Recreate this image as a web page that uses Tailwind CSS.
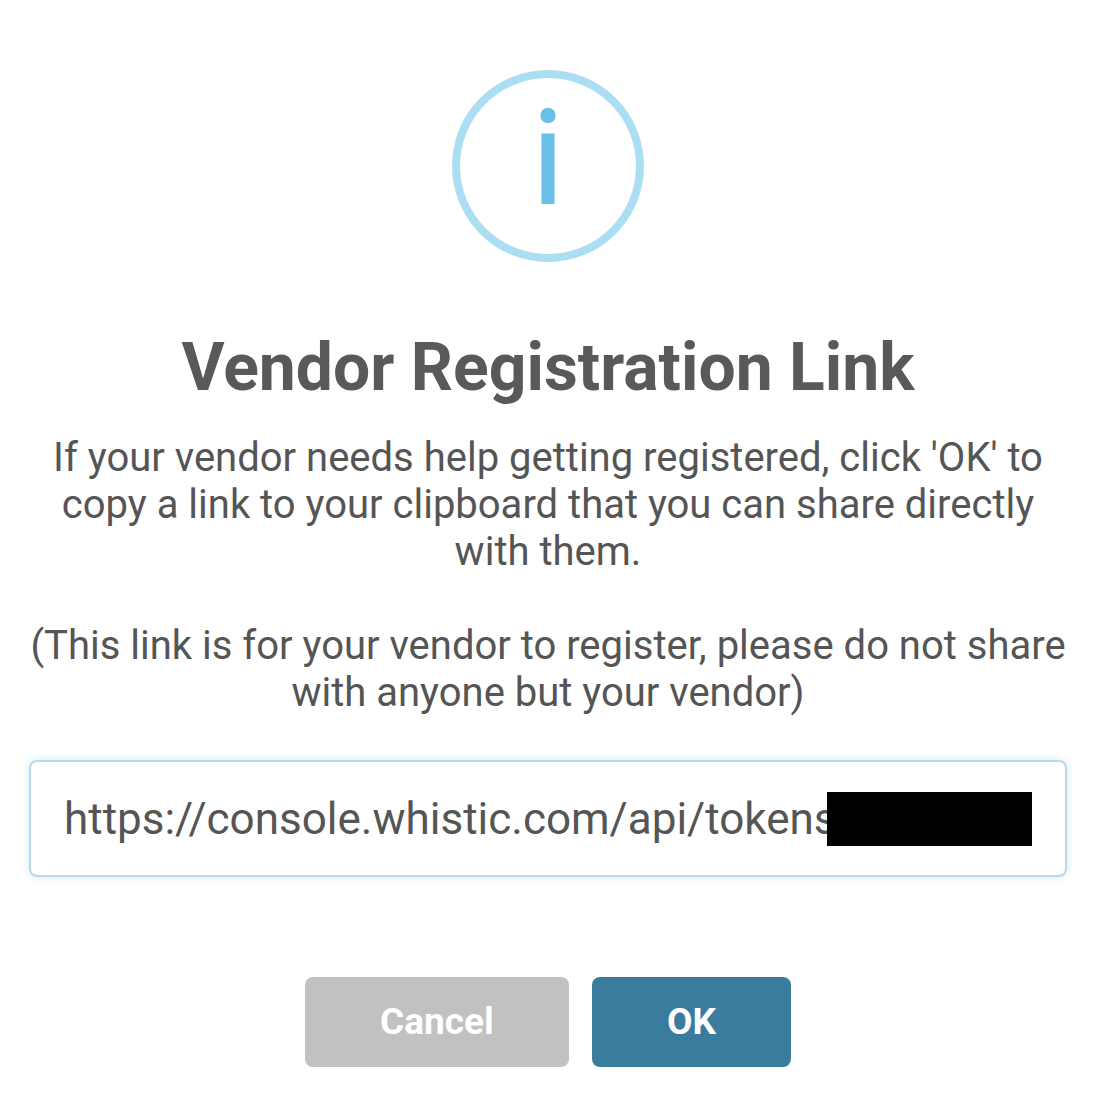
<!DOCTYPE html>
<html lang="en">
<head>
  <meta charset="UTF-8">
  <meta name="viewport" content="width=device-width, initial-scale=1.0">
  <title>Vendor Registration Link</title>
  <script src="https://cdn.jsdelivr.net/npm/@tailwindcss/browser@4"></script>
</head>
<body class="bg-white min-h-screen font-[Roboto,sans-serif] text-[#555555]">
  <form class="flex flex-col items-center pt-[70px] pb-10 pl-[29px] pr-[33px]" role="dialog" aria-labelledby="title">
    <svg class="w-48 h-48" viewBox="0 0 192 192" fill="none" aria-hidden="true">
      <circle cx="96" cy="96" r="92" stroke="#abdef3" stroke-width="8" />
      <rect x="88.5" y="38" width="15" height="15" rx="6.8" fill="#68bfe8" />
      <rect x="89.5" y="63.5" width="13" height="70.5" fill="#68bfe8" />
    </svg>

    <h1 id="title" class="mt-[66px] text-[66px] leading-20 font-bold text-[#595959] text-center">Vendor Registration Link</h1>

    <div class="mt-[26px] text-[40px] leading-[47px] text-center">
      <p>If your vendor needs help getting registered, click 'OK' to copy a link to your clipboard that you can share directly with them.</p>
      <p class="mt-[47px]">(This link is for your vendor to register, please do not share with anyone but your vendor)</p>
    </div>

    <div class="relative mt-11 w-full">
      <input type="text" aria-label="Registration link" value="https://console.whistic.com/api/tokens" readonly
             class="block w-full h-[117px] px-[33px] text-[44px] bg-white border-2 border-[#b8d9eb] rounded-lg shadow-[0_0_8px_#d4e9f6] focus:outline-none">
      <div class="absolute right-[35px] top-8 w-[205px] h-[54px] bg-black"></div>
    </div>

    <div class="mt-[100px] flex justify-center gap-[23px] text-[37px] font-bold text-white">
      <button type="button" class="w-[264px] h-[90px] bg-[#c1c1c1] rounded-lg">Cancel</button>
      <button type="button" class="w-[199px] h-[90px] bg-[#3a7c9e] rounded-lg">OK</button>
    </div>
  </form>
</body>
</html>
